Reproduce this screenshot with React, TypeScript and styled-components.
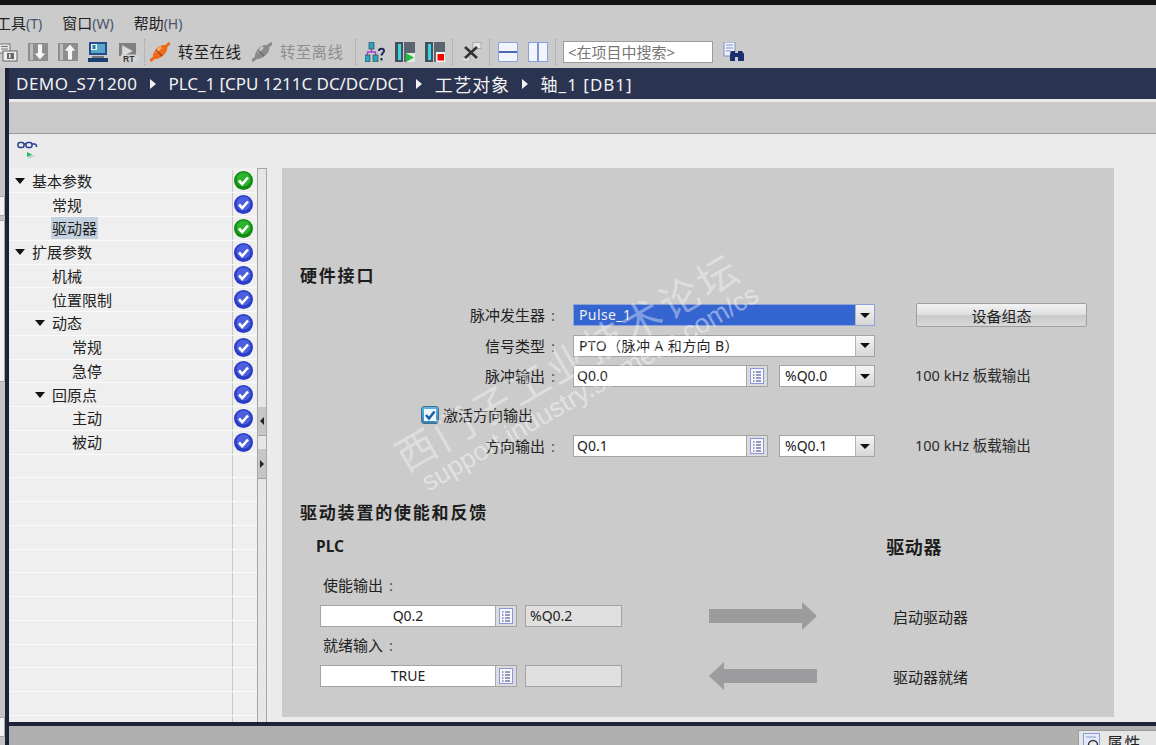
import React from "react";
import styled, { createGlobalStyle } from "styled-components";

const Global = createGlobalStyle`
  html, body { margin: 0; padding: 0; height: 100%; overflow: hidden; background: #c8c8c8; }
  #root { height: 100%; }
  * { box-sizing: border-box; }
`;

const FONT = `"Noto Sans", "Noto Sans CJK SC", sans-serif`;

const Page = styled.div`
  position: relative; width: 1156px; height: 745px; overflow: hidden;
  display: flex; flex-direction: column;
  font-family: ${FONT}; font-size: 14px; color: #222; background: #c8c8c8;
`;
const TopStrip = styled.div`height: 5px; flex: none; background: #141414;`;
const MenuBar = styled.div`
  height: 36px; flex: none; padding-top: 1px; display: flex; align-items: center; gap: 20px; margin-left: -4px;
  background: #cbcbcb;
`;
const MenuItem = styled.span`
  font-size: 15px; color: #222; line-height: 20px;
  & > small { font-size: 14px; color: #47536b; }
`;
const ToolBar = styled.div`
  height: 27px; flex: none; padding-bottom: 5px; margin-left: -2px; display: flex; align-items: center; gap: 10px;
  background: #cbcbcb;
`;
const Sep = styled.i<{ $l?: number; $r?: number }>`
  width: 1px; height: 26px; flex: none; border-left: 1px dotted #a2a2a2;
  margin-left: ${p => p.$l ?? -3}px; margin-right: ${p => p.$r ?? -1}px;
`;
const ToolText = styled.span<{ $off?: boolean }>`
  font-size: 15.5px; letter-spacing: .3px; width: 64px; margin-left: -2px; white-space: nowrap; line-height: 20px;
  color: ${p => (p.$off ? "#8f8f8f" : "#222")};
`;
const SearchBox = styled.div`
  width: 150px; height: 22px; flex: none; background: #fff; border: 1px solid #9b9b9b; padding-left: 4px;
  font-size: 15px; line-height: 20px; color: #777; white-space: nowrap; overflow: hidden;
`;
const Lower = styled.div`flex: 1; min-height: 0; display: flex;`;
const Rail = styled.div`
  width: 9px; flex: none; background: #c3c3c3; border-right: 4px solid #1c2338;
  display: flex; flex-direction: column; align-items: stretch; padding-top: 128px;
`;
const RailPane = styled.div<{ $h: number; $t: number }>`
  height: ${p => p.$h}px; margin-top: ${p => p.$t}px; flex: none; background: #f2f2f2; border: 1px solid #a8a8a8; border-left: 0;
`;
const Main = styled.div`flex: 1; min-width: 0; display: flex; flex-direction: column;`;
const Crumbs = styled.div`
  height: 31px; flex: none; background: #2a3350; color: #f2f2f2; padding-left: 7px;
  display: flex; align-items: center; gap: 12.5px; font-size: 17px; white-space: nowrap;
`;
const CrumbArrow = styled.i`
  width: 0; height: 0; flex: none; border-left: 6px solid #f2f2f2; border-top: 5px solid transparent; border-bottom: 5px solid transparent;
`;
const CrumbText = styled.span<{ $ls: number }>`letter-spacing: ${p => p.$ls}px;`;
const CjkCrumb = styled.span`font-size: 18px; letter-spacing: .7px;`;
const Band = styled.div`
  height: 35px; flex: none; background: #c9c9c9; border-top: 3px solid #ececec; border-bottom: 1px solid #9a9a9a;
`;
const Editor = styled.div`flex: 1; min-height: 0; background: #ebebeb; display: flex; flex-direction: column;`;
const IconStrip = styled.div`height: 34px; flex: none; padding: 5px 0 0 8px;`;
const Columns = styled.div`flex: 1; min-height: 0; display: flex;`;
const Tree = styled.div`
  width: 247px; flex: none; margin-left: 1px; padding-top: 1.5px; overflow: hidden; position: relative; background: #efefef;
`;
const Row = styled.div`
  height: 23.75px; display: grid; grid-template-columns: 223px 1fr; align-items: center;
  border-bottom: 1px solid #fafafa; background: #efefef;
`;
const RowName = styled.div<{ $level: number }>`
  padding-left: ${p => 3 + p.$level * 20}px; display: flex; align-items: center; height: 100%;
  border-right: 1px solid #c8c8c8; font-size: 15px;
`;
const Twisty = styled.i`
  width: 18px; flex: none; height: 6px; position: relative;
  &::before {
    content: ""; position: absolute; left: 2px; top: 0; width: 0; height: 0;
    border-top: 6px solid #111;
    border-left: 5px solid transparent; border-right: 5px solid transparent;
  }
`;
const RowLabel = styled.span<{ $sel?: boolean; $indent?: boolean }>`
  margin-left: ${p => (p.$indent ? 18 : 0)}px;
  padding: 0 1px; line-height: 22px; height: 22px; background: ${p => (p.$sel ? "#c4d2df" : "transparent")};
`;
const Status = styled.div`display: flex; padding-left: 1px; align-items: center;`;
const Scroller = styled.div`
  width: 10px; flex: none; background: #e6e6e6; border-left: 1px solid #a6a6a6; border-right: 1px solid #a6a6a6;
  border-top: 1px solid #a6a6a6; display: flex; flex-direction: column; padding-top: 238px;
`;
const Handle = styled.div<{ $h: number; $t: number }>`
  height: ${p => p.$h}px; margin-top: ${p => p.$t}px; flex: none; background: #c6c6c6; border-bottom: 1px solid #a0a0a0;
  display: flex; align-items: center; justify-content: center;
`;
const HandleArrow = styled.i<{ $left?: boolean }>`
  width: 0; height: 0; border-top: 4px solid transparent; border-bottom: 4px solid transparent;
  ${p => (p.$left ? "border-right: 4px solid #222;" : "border-left: 4px solid #222;")}
`;
const Panel = styled.div`
  width: 832px; flex: none; margin-left: 15px; margin-bottom: 5px; background: #cbcbcb; padding: 97px 0 0 18px;
  display: flex; flex-direction: column;
`;
const Heading = styled.div`
  font-size: 17px; font-weight: 700; letter-spacing: 1.8px; line-height: 22px; height: 22px; color: #1d1d1d;
`;
const FormGrid = styled.div`
  margin-top: 17px; display: grid; grid-template-columns: 258px 302px 172px; column-gap: 15px; row-gap: 8.5px;
  grid-template-rows: 22px 22px 22px 31px 22px; align-items: center;
`;
const Label = styled.div`
  text-align: right; font-size: 15px; white-space: nowrap; line-height: 22px; padding-right: 3px;
  & > b { font-weight: 400; color: #555; margin-left: 6px; }
`;
const Pair = styled.div`display: flex; gap: 11px;`;
const Combo = styled.div<{ $w?: number; $sel?: boolean }>`
  height: 22px; display: flex; width: ${p => (p.$w ? `${p.$w}px` : "100%")}; flex: none;
  border: 1px solid ${p => (p.$sel ? "#8ea3d6" : "#a4a4a4")}; background: #fff;
`;
const ComboText = styled.div<{ $sel?: boolean; $wide?: boolean }>`
  flex: 1; min-width: 0; padding-left: 5px; line-height: 20px; font-size: 14px; white-space: nowrap; overflow: hidden;
  background: ${p => (p.$sel ? "#3565d1" : "#fff")}; color: ${p => (p.$sel ? "#f0f0f0" : "#222")};
  letter-spacing: ${p => (p.$sel || p.$wide ? ".4px" : "0")};
`;
const ComboButton = styled.div`
  width: 19px; flex: none; background: linear-gradient(#f5f5f5, #d6d6d6); border-left: 1px solid #b5b5b5;
  display: flex; align-items: center; justify-content: center;
  &::before {
    content: ""; width: 0; height: 0; border-top: 5px solid #111;
    border-left: 5px solid transparent; border-right: 5px solid transparent;
  }
`;
const Field = styled.div<{ $w: number; $center?: boolean }>`
  height: 22px; width: ${p => p.$w}px; flex: none; display: flex; background: #fff; border: 1px solid #a4a4a4;
  & > span {
    flex: 1; line-height: 20px; font-size: 14px; padding-left: ${p => (p.$center ? 0 : 3)}px;
    text-align: ${p => (p.$center ? "center" : "left")};
  }
`;
const FieldButton = styled.div`
  width: 21px; flex: none; background: #dcdcdc; border-left: 1px solid #a8a8a8;
  display: flex; align-items: center; justify-content: center;
`;
const ConfigButton = styled.button`
  height: 24px; width: 171px; margin-left: 26px; border: 1px solid #9f9f9f; border-radius: 2px; padding: 0;
  font-family: ${FONT}; font-size: 15px; color: #222;
  background: linear-gradient(#f3f3f3, #dedede 50%, #c9c9c9 52%, #d8d8d8);
`;
const Note = styled.div`font-size: 14.5px; white-space: nowrap; color: #2a2a2a; margin: 0 0 3px 25px;`;
const CheckLine = styled.div`
  grid-column: 1 / -1; align-self: end; margin-bottom: 1px; padding-left: 121px; display: flex; align-items: center; gap: 4px;
  height: 22px; font-size: 15px;
`;
const Check = styled.i`
  width: 18px; height: 18px; flex: none; border: 1px solid #4d6b80; border-radius: 3px;
  background: linear-gradient(#58b8e8, #2d86c0); display: flex; align-items: center; justify-content: center;
`;
const Heading2 = styled(Heading)`margin-top: 45px;`;
const TitlesRow = styled.div`
  margin-top: 11px; height: 22px; display: flex; justify-content: space-between; width: 642px; padding-left: 16px; align-items: center;
`;
const PlcTitle = styled.span`font-size: 15.5px; font-weight: 700; color: #1d1d1d;`;
const DriveTitle = styled.span`font-size: 18px; font-weight: 700; color: #1d1d1d; letter-spacing: .6px;`;
const SubLabel = styled.div<{ $second?: boolean }>`
  margin: ${p => (p.$second ? 7 : 17)}px 0 9px 23px; height: 22px; line-height: 22px; font-size: 15px;
  & > b { font-weight: 400; color: #555; margin-left: 6px; }
`;
const DriveRow = styled.div`display: flex; align-items: center; height: 22px; padding-left: 20px;`;
const Display = styled.div`
  width: 97px; height: 22px; margin-left: 8px; flex: none; background: #e0e0e0; border: 1px solid #a2a2a2;
  padding-left: 4px; line-height: 20px; font-size: 14px;
`;
const ArrowSlot = styled.div`margin-left: 87px; width: 108px; height: 28px; flex: none;`;
const DriveLabel = styled.span`margin-left: 76px; font-size: 15px; white-space: nowrap;`;
const Footer = styled.div`
  height: 23px; flex: none; background: #b0b0b0; border-top: 4px solid #1c2338; overflow: hidden; display: flex; justify-content: flex-end;
`;
const FooterTab = styled.div`
  width: 78px; height: 26px; margin-top: 4px; background: #e6e6e6; border: 1px solid #9c9c9c; border-right: 0;
  display: flex; align-items: flex-start; gap: 6px; padding: 2px 0 0 4px; font-size: 16px; line-height: 20px; letter-spacing: 1.5px;
`;
const Watermark = styled.div`position: absolute; inset: 0; pointer-events: none; overflow: hidden;`;
const WmCn = styled.span`
  position: absolute; left: 368px; top: 338px; width: 400px; height: 48px; text-align: center; white-space: nowrap;
  transform: rotate(-30deg); font-size: 40px; letter-spacing: 3.4px; line-height: 48px; color: rgba(255,255,255,.38);
`;
const WmEn = styled.span`
  position: absolute; left: 370px; top: 373px; width: 440px; height: 30px; text-align: center; white-space: nowrap;
  transform: rotate(-30deg); font-family: "Liberation Sans", sans-serif; font-size: 26.5px; line-height: 30px; color: rgba(255,255,255,.45);
`;

const Icon = styled.svg`width: 20px; height: 20px; flex: none; display: block;`;
const IconLabel = styled.text`font-family: "Liberation Sans", sans-serif; font-weight: 700; font-size: 8.5px; fill: #333;`;

const ClippedSave = () => (
  <Icon viewBox="0 0 20 20"><rect x="1" y="2" width="11" height="9" fill="#e8e8e8" stroke="#777" /><path d="M3 4.500h7M3 7h7" stroke="#777" /><rect x="5" y="9" width="14" height="10" fill="#eee" stroke="#666" /><rect x="9" y="11" width="7" height="6" fill="#666" /><rect x="11" y="12" width="1.500" height="4" fill="#eee" /></Icon>
);
const Transfer = ({ up }: { up?: boolean }) => (
  <Icon viewBox="0 0 20 20">
    <rect x="0" y="1" width="20" height="18" fill="#8e8e8e" /><rect x="2" y="2" width="3" height="16" fill="#bdbdbd" />
    <path d={up ? "M12 2 18 9H14.500V18H9.500V9H6Z" : "M12 18 18 11H14.500V2H9.500V11H6Z"} fill="#f6f6f6" stroke="#666" strokeWidth=".5" />
  </Icon>
);
const Monitor = () => (
  <Icon viewBox="0 0 20 20">
    <rect x="1" y="0" width="18" height="13" fill="#244e8e" /><rect x="3" y="2" width="14" height="9" fill="#58a6c8" /><rect x="3" y="2" width="6" height="6" fill="#e8f2f6" /><rect x="4.500" y="3" width="3" height="4" fill="#2c7a9c" />
    <rect x="4" y="14" width="12" height="2" fill="#777" /><rect x="0" y="16" width="20" height="4" fill="#1d3f70" />
  </Icon>
);
const RtIcon = () => (
  <Icon viewBox="0 0 20 20">
    <rect x="1" y="1" width="17" height="13" fill="#7f7f7f" /><path d="M4 3 15 9 4 15Z" fill="#dcdcdc" stroke="#999" strokeWidth=".5" />
    <rect x="3" y="12.500" width="17" height="7.500" fill="#d4d4d4" />
    <IconLabel x="5" y="19.500">RT</IconLabel>
  </Icon>
);
const PlugIcon = ({ off }: { off?: boolean }) => {
  const a = off ? "#8a8a8a" : "#ee6a1c";
  const b = off ? "#c8c8c8" : "#ffb070";
  const d = off ? "#6a6a6a" : "#a83c08";
  return (
    <Icon viewBox="0 0 20 20">
      <path d="M0 19 5 15M15 5 20 1" stroke={a} strokeWidth="3" />
      <path d="M3 13C4 8 8 4 13 3 17 3 18 5 17 8 16 12 11 16 7 17 4 17 3 16 3 13Z" fill={a} />
      <path d="M6 10 11 5" stroke={b} strokeWidth="2.500" />
      <path d="M6 8 12 14" stroke={d} strokeWidth="1.200" />
    </Icon>
  );
};
const TreeHelp = () => (
  <Icon viewBox="0 0 20 20">
    <rect x="4" y="0" width="5" height="7" fill="#2aa6bf" stroke="#333" strokeWidth=".6" />
    <path d="M6.500 7V10M2.500 13V10H10.500V13" fill="none" stroke="#a040d0" strokeWidth="1.400" />
    <rect x="0" y="13" width="5" height="7" fill="#2aa6bf" stroke="#333" strokeWidth=".6" /><rect x="8" y="13" width="5" height="7" fill="#2aa6bf" stroke="#333" strokeWidth=".6" />
    <path d="M14 9c0-3 5-3 5 0 0 2-2.500 2-2.500 4.500M16.500 16v2.500" fill="none" stroke="#1c2b5a" strokeWidth="2" />
  </Icon>
);
const RunStop = ({ stop }: { stop?: boolean }) => (
  <Icon viewBox="0 0 20 20">
    <rect x="0" y="0" width="8" height="20" fill="#44505c" /><rect x="3" y="2" width="3" height="16" fill="#38d8e0" />
    <rect x="9" y="0" width="11" height="20" fill="#5c6670" />
    {stop ? (<><rect x="11" y="10" width="9" height="10" fill="#f4f4f4" /><rect x="12.500" y="12" width="6.500" height="6.500" fill="#f00" /></>)
      : (<><rect x="11" y="11" width="9" height="9" fill="#e4ece6" /><path d="M11 11 19 15.500 11 20Z" fill="#22c040" /></>)}
  </Icon>
);
const CloseWin = () => (
  <Icon viewBox="0 0 20 20">
    <rect x="11" y="0.500" width="8" height="6" fill="#e8e8e8" stroke="#aaa" />
    <rect x="0" y="15" width="8" height="5" fill="#dcdcdc" stroke="#b4b4b4" />
    <path d="M3 5 15 16M15 5 3 16" stroke="#333" strokeWidth="2.600" />
  </Icon>
);
const SplitIcon = ({ vertical }: { vertical?: boolean }) => (
  <Icon viewBox="0 0 20 20">
    <rect x=".5" y=".5" width="19" height="19" fill="#f2f4fc" stroke="#8aa0e0" />
    {vertical ? <rect x="9" y="1" width="2" height="18" fill="#7f93d8" /> : <rect x="1" y="9" width="18" height="2" fill="#4d66b8" />}
  </Icon>
);
const Binoculars = () => (
  <Icon viewBox="0 0 22 20" style={{ width: 22 }}>
    <rect x="1" y="0" width="11" height="14" fill="#eef0fa" stroke="#8090c8" />
    <path d="M3 3h7M3 6h7M3 9h5" stroke="#8090c8" />
    <path d="M8 9h4v10H7V12ZM15 9h4l2 3v7h-6Z" fill="#1b2f6e" /><rect x="12" y="11" width="3" height="4" fill="#1b2f6e" />
  </Icon>
);
const Glasses = () => (
  <svg width="22" height="20" viewBox="0 0 22 20" style={{ display: "block" }}>
    <rect x="1" y="3.500" width="6" height="5" rx="2" fill="none" stroke="#2b3f92" strokeWidth="1.500" />
    <rect x="9" y="3.500" width="6" height="5" rx="2" fill="none" stroke="#2b3f92" strokeWidth="1.500" />
    <path d="M7 5h2M15 5h2.500c1.500 0 2 1 2 3" fill="none" stroke="#2b3f92" strokeWidth="1.500" />
    <path d="M11 14 18 17 11 20Z" fill="#bcd6c8" /><path d="M10 13 15 15.500 10 18Z" fill="#22c060" />
  </svg>
);
const StatusDot = ({ green }: { green?: boolean }) => (
  <svg width="19" height="19" viewBox="0 0 19 19" style={{ display: "block" }}>
    <circle cx="9.500" cy="9.500" r="9.500" fill={green ? "#128a12" : "#2c3cc4"} />
    <circle cx="9.500" cy="8.500" r="7" fill={green ? "#2cb52c" : "#4a60e0"} />
    <path d="M5 9.500 8.200 13 14 6.500" fill="none" stroke="#fff" strokeWidth="2.600" />
  </svg>
);
const ListIcon = () => (
  <svg width="14" height="16" viewBox="0 0 14 16" style={{ display: "block" }}>
    <rect x=".5" y=".5" width="13" height="15" fill="#f6f7ff" stroke="#8a97dc" />
    <path d="M3 4h1.500M6 4h5M3 7h1.500M6 7h5M3 10h1.500M6 10h5M3 13h1.500M6 13h5" stroke="#3a3f78" />
  </svg>
);
const CheckMark = () => (
  <svg width="16" height="16" viewBox="0 0 16 16" style={{ display: "block" }}>
    <rect x="2" y="2" width="12" height="12" fill="#eef6fb" />
    <path d="M4 8 7 11.500 12.500 4.500" fill="none" stroke="#1c5ea8" strokeWidth="2.500" />
  </svg>
);
const BlockArrow = ({ left }: { left?: boolean }) => (
  <svg width="108" height="28" viewBox="0 0 108 28" style={{ display: "block" }}>
    <path d={left ? "M0 14 15 0V7H108V21H15V28Z" : "M108 14 93 0V7H0V21H93V28Z"} fill="#9c9c9f" />
  </svg>
);
const TabIcon = () => (
  <svg width="18" height="20" viewBox="0 0 18 20" style={{ display: "block", flex: "none" }}>
    <rect x=".5" y=".5" width="16" height="19" fill="#e6ebfa" stroke="#8a9cd8" />
    <path d="M3 4h10" stroke="#8a9cd8" />
    <circle cx="10" cy="12" r="4.500" fill="#eee" stroke="#333" strokeWidth="1.500" />
  </svg>
);

const rows: { name: string; level: number; twisty?: boolean; indent?: boolean; green?: boolean; sel?: boolean }[] = [
  { name: "基本参数", level: 0, twisty: true, green: true },
  { name: "常规", level: 1, indent: true },
  { name: "驱动器", level: 1, indent: true, green: true, sel: true },
  { name: "扩展参数", level: 0, twisty: true },
  { name: "机械", level: 1, indent: true },
  { name: "位置限制", level: 1, indent: true },
  { name: "动态", level: 1, twisty: true },
  { name: "常规", level: 2, indent: true },
  { name: "急停", level: 2, indent: true },
  { name: "回原点", level: 1, twisty: true },
  { name: "主动", level: 2, indent: true },
  { name: "被动", level: 2, indent: true },
];

export default function App() {
  return (
    <Page>
      <Global />
      <TopStrip />
      <MenuBar>
        <MenuItem>工具<small>(T)</small></MenuItem>
        <MenuItem>窗口<small>(W)</small></MenuItem>
        <MenuItem>帮助<small>(H)</small></MenuItem>
      </MenuBar>
      <ToolBar>
        <ClippedSave />
        <Transfer />
        <Transfer up />
        <Monitor />
        <RtIcon />
        <Sep $l={-4} $r={-5} />
        <PlugIcon />
        <ToolText>转至在线</ToolText>
        <PlugIcon off />
        <ToolText $off>转至离线</ToolText>
        <Sep $l={1} $r={-1} />
        <TreeHelp />
        <RunStop />
        <RunStop stop />
        <Sep $l={-3} $r={-1} />
        <CloseWin />
        <Sep $l={-3} $r={-2} />
        <SplitIcon />
        <SplitIcon vertical />
        <Sep $l={-3} $r={-3} />
        <SearchBox>&lt;在项目中搜索&gt;</SearchBox>
        <Binoculars />
      </ToolBar>
      <Lower>
        <Rail>
          <RailPane $h={20} $t={0} />
          <RailPane $h={162} $t={4} />
          <RailPane $h={20} $t={335} />
        </Rail>
        <Main>
          <Crumbs>
            <CrumbText $ls={0.5}>DEMO_S71200</CrumbText>
            <CrumbArrow />
            <CrumbText $ls={-0.05}>PLC_1 [CPU 1211C DC/DC/DC]</CrumbText>
            <CrumbArrow />
            <CjkCrumb>工艺对象</CjkCrumb>
            <CrumbArrow />
            <CrumbText $ls={1}>轴_1 [DB1]</CrumbText>
          </Crumbs>
          <Band />
          <Editor>
            <IconStrip><Glasses /></IconStrip>
            <Columns>
              <Tree>
                {rows.map((r, i) => (
                  <Row key={i}>
                    <RowName $level={r.level}>
                      {r.twisty && <Twisty />}
                      <RowLabel $sel={r.sel} $indent={r.indent}>{r.name}</RowLabel>
                    </RowName>
                    <Status><StatusDot green={r.green} /></Status>
                  </Row>
                ))}
                {Array.from({ length: 12 }).map((_, i) => (
                  <Row key={`e${i}`}>
                    <RowName $level={0} />
                    <Status />
                  </Row>
                ))}
              </Tree>
              <Scroller>
                <Handle $h={29} $t={0}><HandleArrow $left /></Handle>
                <Handle $h={30} $t={13}><HandleArrow /></Handle>
              </Scroller>
              <Panel>
                <Heading>硬件接口</Heading>
                <FormGrid>
                  <Label>脉冲发生器<b>:</b></Label>
                  <Combo $sel><ComboText $sel>Pulse_1</ComboText><ComboButton /></Combo>
                  <ConfigButton>设备组态</ConfigButton>

                  <Label>信号类型<b>:</b></Label>
                  <Combo><ComboText $wide>PTO（脉冲 A 和方向 B）</ComboText><ComboButton /></Combo>
                  <span />

                  <Label>脉冲输出<b>:</b></Label>
                  <Pair>
                    <Field $w={195}><span>Q0.0</span><FieldButton><ListIcon /></FieldButton></Field>
                    <Combo $w={96}><ComboText>%Q0.0</ComboText><ComboButton /></Combo>
                  </Pair>
                  <Note>100 kHz 板载输出</Note>

                  <CheckLine><Check><CheckMark /></Check>激活方向输出</CheckLine>

                  <Label>方向输出<b>:</b></Label>
                  <Pair>
                    <Field $w={195}><span>Q0.1</span><FieldButton><ListIcon /></FieldButton></Field>
                    <Combo $w={96}><ComboText>%Q0.1</ComboText><ComboButton /></Combo>
                  </Pair>
                  <Note>100 kHz 板载输出</Note>
                </FormGrid>

                <Heading2>驱动装置的使能和反馈</Heading2>
                <TitlesRow><PlcTitle>PLC</PlcTitle><DriveTitle>驱动器</DriveTitle></TitlesRow>
                <SubLabel>使能输出<b>:</b></SubLabel>
                <DriveRow>
                  <Field $w={197} $center><span>Q0.2</span><FieldButton><ListIcon /></FieldButton></Field>
                  <Display>%Q0.2</Display>
                  <ArrowSlot><BlockArrow /></ArrowSlot>
                  <DriveLabel>启动驱动器</DriveLabel>
                </DriveRow>
                <SubLabel $second>就绪输入<b>:</b></SubLabel>
                <DriveRow>
                  <Field $w={197} $center><span>TRUE</span><FieldButton><ListIcon /></FieldButton></Field>
                  <Display />
                  <ArrowSlot><BlockArrow left /></ArrowSlot>
                  <DriveLabel>驱动器就绪</DriveLabel>
                </DriveRow>
              </Panel>
            </Columns>
          </Editor>
          <Footer>
            <FooterTab><TabIcon />属性</FooterTab>
          </Footer>
        </Main>
      </Lower>
      <Watermark>
        <WmCn>西门子工业技术论坛</WmCn>
        <WmEn>support.industry.siemens.com/cs</WmEn>
      </Watermark>
    </Page>
  );
}
